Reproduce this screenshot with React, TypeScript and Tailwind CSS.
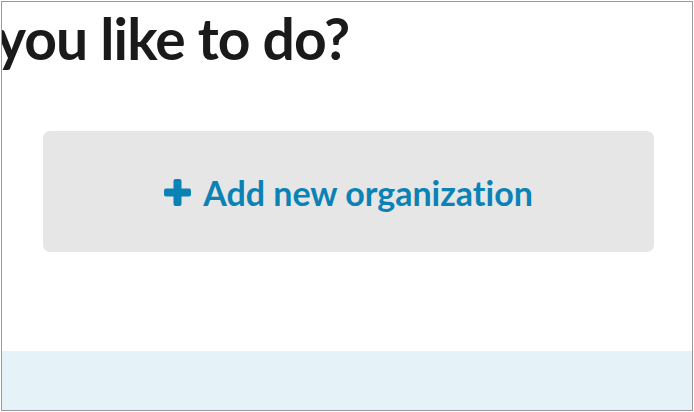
const font = { fontFamily: '"Lato", "Liberation Sans", sans-serif' };

function PlusIcon() {
  return (
    <svg width="27" height="27" viewBox="0 0 27 27" className="shrink-0 fill-[#0a82b5]">
      <rect x="9.5" y="0" width="8" height="27" rx="2" />
      <rect x="0" y="9.5" width="27" height="8" rx="2" />
    </svg>
  );
}

export default function App() {
  return (
    <div
      className="w-[694px] h-[412px] bg-white p-px overflow-hidden [font-variant-ligatures:none]"
      style={font}
    >
      <div className="flex h-full flex-col border border-[#999] overflow-hidden">
        {/* heading, cut off on the left like the scrolled page */}
        <div className="h-[91px] overflow-hidden">
          <h1 className="-ml-[6px] mt-[4px] whitespace-nowrap text-[57px] font-bold leading-[64px] tracking-[-0.9px] text-[#1a1a1a]">
            you like to do?
          </h1>
        </div>

        <div className="pt-[38px] pl-[41px]">
          <button className="flex h-[121px] w-[611px] items-center justify-center gap-[12px] rounded-[7px] bg-[#e6e6e6] pt-[2px]">
            <PlusIcon />
            <span className="text-[34px] font-bold leading-none text-[#0a82b5]">
              Add new organization
            </span>
          </button>
        </div>

        <div className="mt-[99px] flex-1 bg-[#e5f2f8]" />
      </div>
    </div>
  );
}
